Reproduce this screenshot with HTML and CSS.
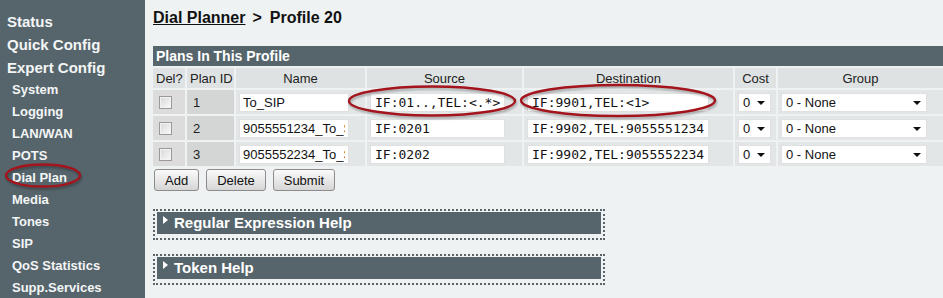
FILE: index.html
```html
<!DOCTYPE html>
<html lang="en">
<head>
    <meta charset="UTF-8">
    <meta name="viewport" content="width=device-width, initial-scale=1.0">
    <title>Dial Planner</title>
    <link rel="stylesheet" href="styles.css">
</head>
<body>
    <div class="side-menu">
        <a class="menu-top">Status</a>
        <a class="menu-top">Quick Config</a>
        <a class="menu-top">Expert Config</a>
        <a class="menu-sub">System</a>
        <a class="menu-sub">Logging</a>
        <a class="menu-sub">LAN/WAN</a>
        <a class="menu-sub">POTS</a>
        <a class="menu-sub">Dial Plan</a>
        <a class="menu-sub">Media</a>
        <a class="menu-sub">Tones</a>
        <a class="menu-sub">SIP</a>
        <a class="menu-sub">QoS Statistics</a>
        <a class="menu-sub">Supp.Services</a>
    </div>

    <div class="main-content">
        <h1 class="page-title"><a class="crumb">Dial Planner</a><span class="crumb-sep">&gt;</span>Profile 20</h1>

        <table class="plan-table">
            <colgroup>
                <col style="width: 32px">
                <col style="width: 47px">
                <col style="width: 129px">
                <col style="width: 155px">
                <col style="width: 209px">
                <col style="width: 41px">
                <col>
            </colgroup>
            <tr>
                <th class="table-title" colspan="7">Plans In This Profile</th>
            </tr>
            <tr class="head-row">
                <td>Del?</td>
                <td>Plan ID</td>
                <td class="center">Name</td>
                <td class="center">Source</td>
                <td class="center">Destination</td>
                <td class="center">Cost</td>
                <td class="center">Group</td>
            </tr>
            <tr class="plan-row">
                <td class="del-cell"><input type="checkbox" class="del-box"></td>
                <td class="id-cell">1</td>
                <td><input type="text" class="name-input" value="To_SIP"></td>
                <td><input type="text" class="mono-input src-input" value="IF:01..,TEL:<.*>"></td>
                <td><input type="text" class="mono-input dst-input" value="IF:9901,TEL:<1>"></td>
                <td><div class="select-wrap cost-wrap"><select><option>0</option></select></div></td>
                <td><div class="select-wrap group-wrap"><select><option>0 - None</option></select></div></td>
            </tr>
            <tr class="plan-row">
                <td class="del-cell"><input type="checkbox" class="del-box"></td>
                <td class="id-cell">2</td>
                <td><input type="text" class="name-input" value="9055551234_To_SIP"></td>
                <td><input type="text" class="mono-input src-input" value="IF:0201"></td>
                <td><input type="text" class="mono-input dst-input" value="IF:9902,TEL:9055551234"></td>
                <td><div class="select-wrap cost-wrap"><select><option>0</option></select></div></td>
                <td><div class="select-wrap group-wrap"><select><option>0 - None</option></select></div></td>
            </tr>
            <tr class="plan-row">
                <td class="del-cell"><input type="checkbox" class="del-box"></td>
                <td class="id-cell">3</td>
                <td><input type="text" class="name-input" value="9055552234_To_SIP"></td>
                <td><input type="text" class="mono-input src-input" value="IF:0202"></td>
                <td><input type="text" class="mono-input dst-input" value="IF:9902,TEL:9055552234"></td>
                <td><div class="select-wrap cost-wrap"><select><option>0</option></select></div></td>
                <td><div class="select-wrap group-wrap"><select><option>0 - None</option></select></div></td>
            </tr>
        </table>

        <div class="table-buttons">
            <button class="form-btn">Add</button>
            <button class="form-btn">Delete</button>
            <button class="form-btn">Submit</button>
        </div>

        <div class="help-box">
            <div class="help-bar"><span class="help-arrow"></span>Regular Expression Help</div>
        </div>
        <div class="help-box">
            <div class="help-bar"><span class="help-arrow"></span>Token Help</div>
        </div>
    </div>

    <!-- red annotation rings drawn over the screenshot -->
    <svg class="annotations" width="943" height="298" viewBox="0 0 943 298">
        <ellipse cx="43" cy="175.5" rx="37" ry="11" />
        <ellipse cx="432" cy="101" rx="83" ry="14.5" />
        <ellipse cx="618" cy="100.5" rx="97" ry="15.5" />
    </svg>
</body>
</html>
```

FILE: styles.css
```css
body {
    margin: 0;
    padding: 0;
    background: #eef2f3;
    font-family: 'Liberation Sans', Arial, sans-serif;
    display: flex;
    min-height: 298px;
    position: relative;
    overflow: hidden;
}

.side-menu {
    width: 145px;
    flex-shrink: 0;
    background: #56656c;
    padding-top: 10px;
    display: flex;
    flex-direction: column;
}

.side-menu a {
    color: #f4f6f6;
    font-weight: bold;
    line-height: 22px;
    white-space: nowrap;
}

.menu-top {
    font-size: 15px;
    padding-left: 7px;
    line-height: 23px !important;
}

.menu-sub {
    font-size: 13px;
    padding-left: 12px;
}

.main-content {
    flex: 1;
    padding: 8px 0 0 8px;
}

.page-title {
    margin: 0;
    font-size: 16px;
    line-height: 20px;
    font-weight: bold;
    color: #111;
}

.crumb {
    text-decoration: underline;
}

.crumb-sep {
    margin: 0 8px 0 7px;
}

.plan-table {
    border-collapse: separate;
    border-spacing: 2px;
    table-layout: fixed;
    width: 794px;
    margin: 16px -2px 0 -2px;
    font-size: 13px;
    color: #222;
}

.plan-table td {
    padding: 0 0 0 3px;
    white-space: nowrap;
    overflow: hidden;
}

.table-title {
    background: #56656c;
    color: #fff;
    font-size: 14px;
    text-align: left;
    height: 20px;
    padding: 0 3px;
}

.head-row td {
    background: #dfe2e3;
    height: 20px;
    font-size: 13px;
    color: #222;
}

.head-row td.center {
    text-align: center;
    padding: 0;
}

.plan-row td {
    height: 24px;
    background: #e3e6e7;
}

.plan-row td.del-cell {
    background: #dcdcdc;
    padding-left: 6px;
}

.plan-row td.id-cell {
    background: #d4d5d5;
    padding-left: 6px;
}

.del-box {
    appearance: none;
    width: 13px;
    height: 13px;
    margin: 3px 0 0 0;
    border: 1px solid #9a9a9a;
    background: linear-gradient(135deg, #d8d8d8, #fafafa);
    box-shadow: inset 0 0 0 1px #f2f2f2;
}

.plan-row input[type="text"],
.plan-row select {
    height: 19px;
    box-sizing: border-box;
    border: 1px solid #e0e0e0;
    background: #fff;
    margin: 0;
    outline: none;
    color: #111;
}

.name-input {
    width: 110px;
    font-family: 'Liberation Sans', Arial, sans-serif;
    font-size: 13px;
    padding: 0 3px;
}

.mono-input {
    font-family: 'DejaVu Sans Mono', 'Liberation Mono', monospace;
    font-size: 13px;
    padding: 0 3px 0 4px;
}

.src-input {
    width: 135px;
}

.dst-input {
    width: 182px;
}

.select-wrap {
    position: relative;
    display: inline-block;
}

.select-wrap::after {
    content: "";
    position: absolute;
    top: 8px;
    right: 6px;
    border-left: 4px solid transparent;
    border-right: 4px solid transparent;
    border-top: 4px solid #111;
    pointer-events: none;
}

.plan-row select {
    appearance: none;
    font-family: 'Liberation Sans', Arial, sans-serif;
    font-size: 13px;
    padding: 0 0 0 4px;
    border-radius: 0;
}

.cost-wrap select {
    width: 33px;
}

.group-wrap select {
    width: 146px;
}

.table-buttons {
    display: flex;
    gap: 7px;
    margin: 1px 0 0 1px;
}

.form-btn {
    height: 22px;
    padding: 0 10px;
    font-family: 'Liberation Sans', Arial, sans-serif;
    font-size: 13px;
    color: #111;
    border: 1px solid #8c8c8c;
    border-radius: 3px;
    background: linear-gradient(#fafafa, #e6e6e6 55%, #d6d6d6);
}

.help-box {
    width: 444px;
    border: 2px dotted #5b6468;
    padding: 1px 2px 4px;
    margin-top: 18px;
}

.help-box + .help-box {
    margin-top: 14px;
}

.help-bar {
    background: #56656c;
    color: #fff;
    font-weight: bold;
    font-size: 15px;
    height: 22px;
    line-height: 22px;
    padding-left: 6px;
    display: flex;
    align-items: center;
}

.help-arrow {
    width: 0;
    height: 0;
    border-top: 4px solid transparent;
    border-bottom: 4px solid transparent;
    border-left: 5px solid #fff;
    margin: -6px 6px 0 0;
}

.annotations {
    position: absolute;
    left: 0;
    top: 0;
    pointer-events: none;
}

.annotations ellipse {
    fill: none;
    stroke: #a3141c;
    stroke-width: 2.4;
    filter: drop-shadow(1px 2px 1px rgba(0, 0, 0, 0.3));
}
```
